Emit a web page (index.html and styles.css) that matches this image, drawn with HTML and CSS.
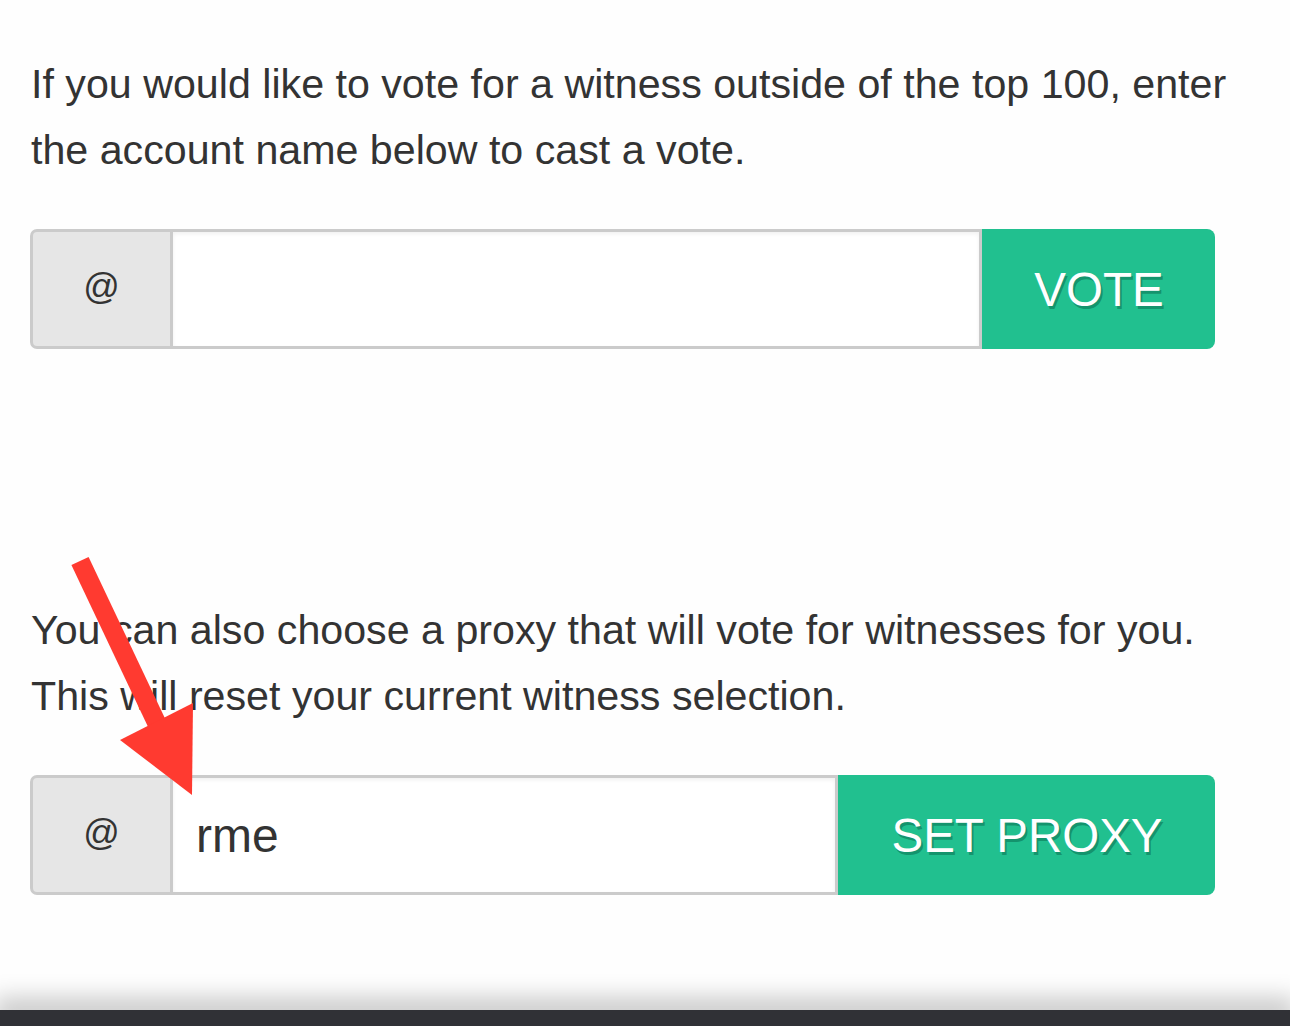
FILE: index.html
```html
<!DOCTYPE html>
<html>
<head>
<meta charset="utf-8">
<link rel="stylesheet" href="styles.css">
</head>
<body>
<div class="page">
  <main class="content">
    <p class="note">If you would like to vote for a witness outside of the top 100, enter the account name below to cast a vote.</p>
    <form class="group group-vote">
      <span class="addon">@</span>
      <input class="field" type="text" value="">
      <button class="btn" type="button">VOTE</button>
    </form>
    <p class="note note-proxy">You can also choose a proxy that will vote for witnesses for you. This will reset your current witness selection.</p>
    <form class="group group-proxy">
      <span class="addon">@</span>
      <input class="field" type="text" value="rme">
      <button class="btn btn-proxy" type="button">SET PROXY</button>
    </form>
  </main>
  <footer class="footer"></footer>
  <svg class="arrow" width="220" height="260" viewBox="0 0 220 260">
    <line x1="80" y1="21" x2="160" y2="190" stroke="#ff3a30" stroke-width="19"/>
    <polygon points="120,200 193,163 192,255" fill="#ff3a30"/>
  </svg>
</div>
</body>
</html>
```

FILE: styles.css
```css
html, body {
  margin: 0;
  padding: 0;
  background: #fefefe;
}
.page {
  position: relative;
  width: 1290px;
  height: 1026px;
  overflow: hidden;
  font-family: "Liberation Sans", Arial, sans-serif;
  color: #333333;
}
.content {
  width: 1185px;
  padding: 51px 0 0 30px;
  height: 959px;
  box-sizing: content-box;
}
.note {
  margin: 0;
  padding-left: 1px;
  font-size: 41.2px;
  line-height: 66px;
  width: 1215px;
}
.note-proxy {
  margin-top: 248px;
}
.group {
  display: flex;
  height: 120px;
  margin: 46px 0 0 0;
  box-sizing: border-box;
}
.addon {
  width: 143px;
  display: flex;
  align-items: center;
  justify-content: center;
  background: #e6e6e6;
  border: 3px solid #cbcbcb;
  border-radius: 7px 0 0 7px;
  box-sizing: border-box;
  font-size: 36px;
  color: #333;
  padding-bottom: 4px;
}
.field {
  flex: 1;
  min-width: 0;
  border: 3px solid #cbcbcb;
  border-left: none;
  margin: 0;
  padding: 0 0 0 23px;
  font-family: "Liberation Sans", Arial, sans-serif;
  font-size: 48px;
  color: #333;
  background: #ffffff;
  box-shadow: inset 0 2px 4px rgba(0,0,0,0.06);
  outline: none;
}
.btn {
  width: 233px;
  border: none;
  margin: 0;
  background: #21c08f;
  color: #ffffff;
  font-family: "Liberation Sans", Arial, sans-serif;
  font-size: 47.5px;
  border-radius: 0 8px 8px 0;
  text-shadow: 2px 3px 0 rgba(10,110,80,0.55);
  padding: 0 0 0 1px;
}
.btn-proxy {
  width: 377px;
}
.footer {
  height: 16px;
  background: #303136;
  box-shadow: 0 -6px 24px 6px rgba(0,0,0,0.22);
  position: relative;
}
.arrow {
  position: absolute;
  left: 0;
  top: 540px;
}
```
